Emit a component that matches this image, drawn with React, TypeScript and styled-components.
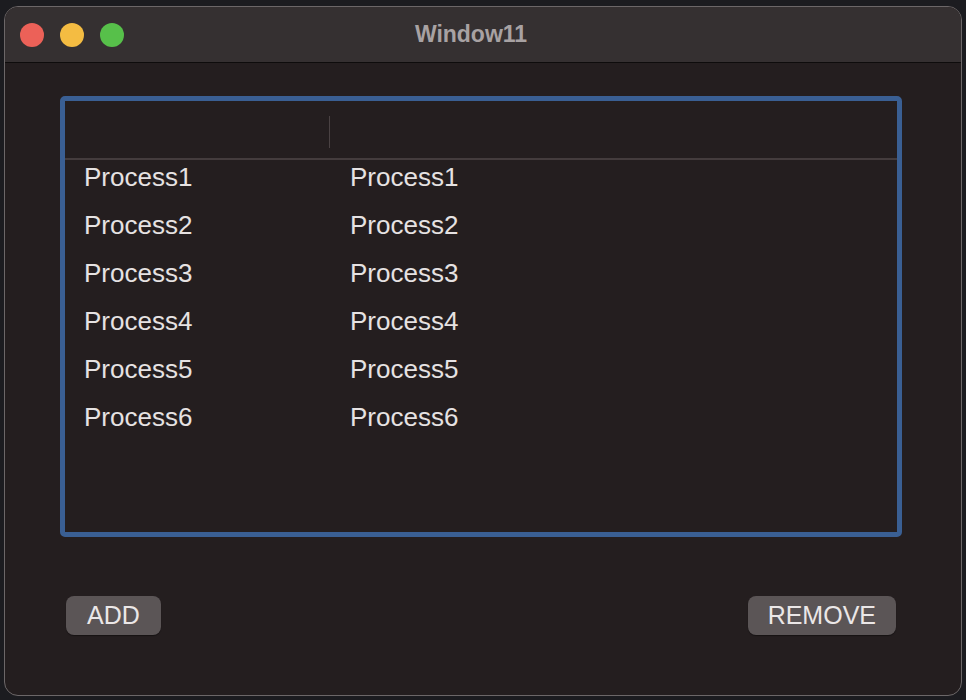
import React from "react";
import styled, { createGlobalStyle } from "styled-components";

const Global = createGlobalStyle`
  html, body { margin: 0; padding: 0; background: #1c1c20; }
  body { width: 966px; height: 700px; overflow: hidden; font-family: "Liberation Sans", Arial, sans-serif; }
`;

const Screen = styled.div`
  width: 966px;
  height: 700px;
  padding: 6px 4px 4px 4px;
  box-sizing: border-box;
  display: flex;
`;

const Window = styled.div`
  flex: 1;
  display: flex;
  flex-direction: column;
  border: 1px solid #6c6768;
  border-radius: 14px;
  overflow: hidden;
  background: #241e1f;
`;

const TitleBar = styled.div`
  height: 55px;
  flex: none;
  background: #353031;
  border-bottom: 1px solid #0e0c0c;
  display: flex;
  align-items: center;
  position: relative;
  padding-left: 15px;
  gap: 16px;
`;

const Light = styled.span<{ $c: string }>`
  width: 24px;
  height: 24px;
  border-radius: 50%;
  background: ${(p) => p.$c};
`;

const Title = styled.div`
  position: absolute;
  left: 0;
  right: 24px;
  top: 0;
  bottom: 0;
  display: flex;
  align-items: center;
  justify-content: center;
  font-weight: bold;
  font-size: 23px;
  color: #a8a2a3;
  pointer-events: none;
`;

const Content = styled.div`
  flex: 1;
  display: flex;
  flex-direction: column;
  padding: 33px 59px 0 55px;
`;

const Table = styled.div`
  height: 441px;
  box-sizing: border-box;
  border: 5px solid #3a5f93;
  border-radius: 5px;
  background: #241e1f;
  display: flex;
  flex-direction: column;
`;

const Header = styled.div`
  height: 57px;
  flex: none;
  border-bottom: 2px solid #443c3d;
  display: grid;
  grid-template-columns: 264px 1fr;
  align-items: center;
`;

const HeaderCell = styled.div<{ $divider?: boolean }>`
  height: 32px;
  margin-top: 4px;
  border-left: ${(p) => (p.$divider ? "1px solid #4a4243" : "none")};
`;

const RowList = styled.div`
  display: flex;
  flex-direction: column;
  margin-top: -7px;
`;

const Row = styled.div`
  display: grid;
  grid-template-columns: 266px 1fr;
  height: 48px;
  align-items: center;
  padding-left: 19px;
  font-size: 26px;
  color: #e6e2e2;
`;

const Footer = styled.div`
  display: flex;
  justify-content: space-between;
  padding: 59px 6px 0 6px;
`;

const Button = styled.button`
  height: 39px;
  padding: 0 20px;
  min-width: 95px;
  border: none;
  border-radius: 8px;
  background: #5b5556;
  color: #ebe7e7;
  font-family: "Liberation Sans", Arial, sans-serif;
  font-size: 25px;
  box-shadow: 0 1px 1px rgba(0,0,0,0.4);
`;

const rows = [1, 2, 3, 4, 5, 6];

export default function App() {
  return (
    <>
      <Global />
      <Screen>
        <Window>
          <TitleBar>
            <Light $c="#ec6158" />
            <Light $c="#f4bc42" />
            <Light $c="#57c04a" />
            <Title>Window11</Title>
          </TitleBar>
          <Content>
            <Table>
              <Header>
                <HeaderCell />
                <HeaderCell $divider />
              </Header>
              <RowList>
                {rows.map((n) => (
                  <Row key={n}>
                    <span>Process{n}</span>
                    <span>Process{n}</span>
                  </Row>
                ))}
              </RowList>
            </Table>
            <Footer>
              <Button>ADD</Button>
              <Button>REMOVE</Button>
            </Footer>
          </Content>
        </Window>
      </Screen>
    </>
  );
}
